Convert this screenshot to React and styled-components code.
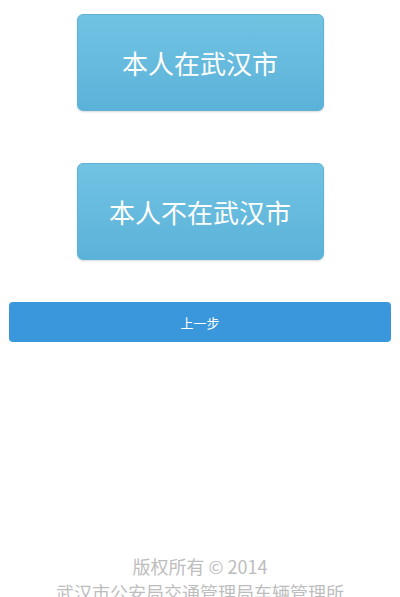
import styled, { createGlobalStyle } from "styled-components";

const GlobalStyle = createGlobalStyle`
  body {
    margin: 0;
    background: #fff;
    font-family: "Noto Sans CJK SC", "Noto Sans", sans-serif;
  }
`;

const Page = styled.div`
  display: flex;
  flex-direction: column;
  align-items: center;
  padding-top: 14px;
`;

const Choices = styled.div`
  display: flex;
  flex-direction: column;
  align-items: center;
  gap: 52px;
`;

const ChoiceButton = styled.button`
  width: 247px;
  height: 97px;
  border: 1px solid #5fb2d6;
  border-radius: 6px;
  background: linear-gradient(to bottom, #71c3e2, #5bb2d9);
  box-shadow: 0 1px 2px rgba(0, 0, 0, 0.15);
  color: #fff;
  font-family: inherit;
  font-size: 26px;
  cursor: pointer;
`;

const BackButton = styled.button`
  width: 382px;
  height: 40px;
  margin-top: 42px;
  border: none;
  border-radius: 4px;
  background: #3a97db;
  color: #fff;
  font-family: inherit;
  font-size: 13px;
  cursor: pointer;
`;

const Footer = styled.footer`
  margin-top: 211px;
  text-align: center;
  color: #bdbdbd;
  font-size: 18px;
  line-height: 26px;
`;

const App = () => {
  return (
    <>
      <GlobalStyle />
      <Page>
        <Choices>
          <ChoiceButton>本人在武汉市</ChoiceButton>
          <ChoiceButton>本人不在武汉市</ChoiceButton>
        </Choices>
        <BackButton>上一步</BackButton>
        <Footer>
          <div>版权所有 © 2014</div>
          <div>武汉市公安局交通管理局车辆管理所</div>
        </Footer>
      </Page>
    </>
  );
};

export default App;
